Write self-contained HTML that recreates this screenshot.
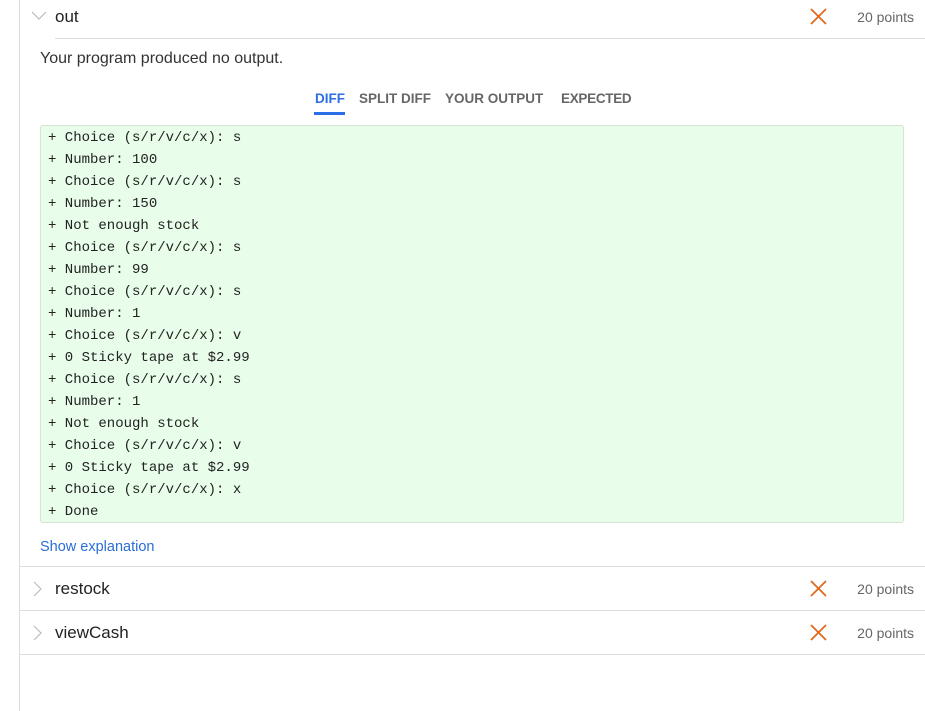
<!DOCTYPE html>
<html><head><style>
body{margin:0;width:925px;height:711px;background:#fff;font-family:"Liberation Sans",sans-serif;position:relative;overflow:hidden}
.vl{position:absolute;left:19px;top:0;width:1px;height:711px;background:#ddd}
.hl{position:absolute;height:1px;background:#ddd;right:0}
.t{position:absolute;color:#222;font-size:17px}
.pts{position:absolute;right:11px;font-size:14px;color:#666}
.x{position:absolute;left:810px;width:17px;height:17px}
.chev{position:absolute}
.code{position:absolute;left:40px;top:125px;width:862px;height:396px;background:#e8fdea;border:1px solid #d4e4d6;border-radius:3px;font-family:"Liberation Mono",monospace;font-size:14px;color:#222}
.code div{height:22px;line-height:22px;padding-left:7px;white-space:pre;position:relative;top:1px}
.tab{position:absolute;top:91px;font-size:13.5px;font-weight:bold;color:#666}
</style></head><body>
<div class="vl"></div>
<svg class="chev" style="left:31px;top:11px" width="16" height="10"><path d="M1 1L8 8L15 1" fill="none" stroke="#bbb" stroke-width="1.2"/></svg>
<div class="t" style="left:55px;top:7px">out</div>
<svg class="x" style="top:8px"><path d="M1 1L16 16M16 1L1 16" stroke="#e06a1e" stroke-width="1.8"/></svg>
<div class="pts" style="top:9px">20 points</div>
<div class="hl" style="left:55px;top:38px"></div>
<div style="position:absolute;left:40px;top:50px;font-size:16px;color:#333">Your program produced no output.</div>
<div class="tab" style="left:315px;color:#2a6ee8">DIFF</div>
<div style="position:absolute;left:314px;top:112px;width:31px;height:3px;background:#2a6ee8"></div>
<div class="tab" style="left:359px">SPLIT DIFF</div>
<div class="tab" style="left:445px">YOUR OUTPUT</div>
<div class="tab" style="left:561px;letter-spacing:-0.3px">EXPECTED</div>
<div class="code">
<div>+ Choice (s/r/v/c/x): s</div><div>+ Number: 100</div><div>+ Choice (s/r/v/c/x): s</div><div>+ Number: 150</div><div>+ Not enough stock</div><div>+ Choice (s/r/v/c/x): s</div><div>+ Number: 99</div><div>+ Choice (s/r/v/c/x): s</div><div>+ Number: 1</div><div>+ Choice (s/r/v/c/x): v</div><div>+ 0 Sticky tape at $2.99</div><div>+ Choice (s/r/v/c/x): s</div><div>+ Number: 1</div><div>+ Not enough stock</div><div>+ Choice (s/r/v/c/x): v</div><div>+ 0 Sticky tape at $2.99</div><div>+ Choice (s/r/v/c/x): x</div><div>+ Done</div>
</div>
<div style="position:absolute;left:40px;top:539px;font-size:14.5px;color:#2a6ed8">Show explanation</div>
<div class="hl" style="left:20px;top:566px"></div>
<svg class="chev" style="left:33px;top:581px" width="10" height="16"><path d="M1 1L8 8L1 15" fill="none" stroke="#bbb" stroke-width="1.2"/></svg>
<div class="t" style="left:55px;top:579px">restock</div>
<svg class="x" style="top:580px"><path d="M1 1L16 16M16 1L1 16" stroke="#e06a1e" stroke-width="1.8"/></svg>
<div class="pts" style="top:581px">20 points</div>
<div class="hl" style="left:20px;top:610px"></div>
<svg class="chev" style="left:33px;top:625px" width="10" height="16"><path d="M1 1L8 8L1 15" fill="none" stroke="#bbb" stroke-width="1.2"/></svg>
<div class="t" style="left:55px;top:623px">viewCash</div>
<svg class="x" style="top:624px"><path d="M1 1L16 16M16 1L1 16" stroke="#e06a1e" stroke-width="1.8"/></svg>
<div class="pts" style="top:625px">20 points</div>
<div class="hl" style="left:20px;top:654px"></div>
</body></html>
